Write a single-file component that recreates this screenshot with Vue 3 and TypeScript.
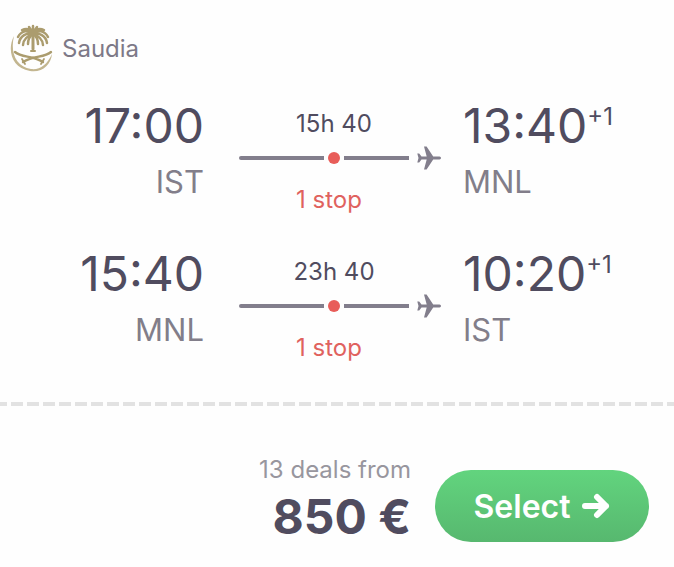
<script setup lang="ts">
interface Leg {
  id: number
  depart: string
  from: string
  duration: string
  stops: string
  arrive: string
  dayShift: string
  to: string
}

const legs: Leg[] = [
  { id: 1, depart: '17:00', from: 'IST', duration: '15h 40', stops: '1 stop', arrive: '13:40', dayShift: '+1', to: 'MNL' },
  { id: 2, depart: '15:40', from: 'MNL', duration: '23h 40', stops: '1 stop', arrive: '10:20', dayShift: '+1', to: 'IST' },
]
</script>

<template>
  <article class="ticket">
    <header class="airline">
      <svg class="emblem" viewBox="0 0 44 48" aria-hidden="true">
        <path d="M4 12C-3 25 1 44 20 47C32 49 41 41 42 30C37 41 30 46 21 45C6 43 0 29 4 12Z" fill="#c3b690" />
        <g fill="none" stroke="#ab9c6e" stroke-linecap="round">
          <path d="M23 10V25" stroke-width="3" />
          <path d="M21 27H25" stroke-width="2" />
          <path d="M23 10C18 5 11 7 8 13M23 10C17 8 10 12 9 19M23 10C18 11 13 16 13 21M23 10C20 12 18 16 18 20M23 10C28 5 35 7 38 13M23 10C29 8 36 12 37 19M23 10C28 11 33 16 33 21M23 10C26 12 28 16 28 20M23 9V2M23 9L19 3M23 9L27 3M23 9C20 5 16 4 12 6M23 9C26 5 30 4 34 6" stroke-width="2.5" />
          <path d="M5 28C12 34 22 31 33 38M41 28C34 34 24 31 13 38" stroke-width="2.4" />
          <path d="M12 35L15 40M34 35L31 40" stroke-width="1.8" />
        </g>
      </svg>
      <span>Saudia</span>
    </header>

    <section v-for="leg in legs" :key="leg.id" class="leg">
      <div class="place departure">
        <time class="clock">{{ leg.depart }}</time>
        <span class="code">{{ leg.from }}</span>
      </div>
      <div class="route">
        <span class="duration">{{ leg.duration }}</span>
        <div class="track">
          <span class="line first"></span>
          <span class="dot"></span>
          <span class="line second"></span>
          <svg class="plane" viewBox="0 0 24 24" aria-hidden="true">
            <path d="M7 0.500H9.600L16.200 10.500H22.500Q24 10.800 24 12Q24 13.200 22.500 13.500H16.200L9.600 23.500H7L9.700 13.500H4.500L2.200 16.500H0.300L1.500 12L0.300 7.500H2.200L4.500 10.500H9.700Z" fill="#827e8c" />
          </svg>
        </div>
        <span class="stops">{{ leg.stops }}</span>
      </div>
      <div class="place arrival">
        <span class="arrival-time"><time class="clock">{{ leg.arrive }}</time><sup class="shift">{{ leg.dayShift }}</sup></span>
        <span class="code">{{ leg.to }}</span>
      </div>
    </section>

    <svg class="divider" aria-hidden="true">
      <line x1="-5" y1="2" x2="100%" y2="2" />
    </svg>

    <footer class="offer">
      <div class="price">
        <span class="deals">13 deals from</span>
        <strong class="amount">850 €</strong>
      </div>
      <button type="button" class="select">
        <span>Select</span>
        <svg class="arrow" viewBox="0 0 28 26" aria-hidden="true">
          <path d="M3 13H24M15 4L24 13L15 22" />
        </svg>
      </button>
    </footer>
  </article>
</template>

<style>
body {
  background: #fefefe;
}
</style>

<style scoped>
.ticket {
  font-family: Inter, "Liberation Sans", sans-serif;
  color: #504c5f;
  padding-top: 24px;
}

.airline {
  display: flex;
  align-items: center;
  gap: 8px;
  height: 48px;
  padding-left: 10px;
  margin-bottom: 24px;
  font-size: 24px;
  color: #7d7987;
}

.emblem {
  width: 44px;
  height: 48px;
}

.leg {
  display: grid;
  grid-template-columns: minmax(0, 1fr) 202px minmax(0, 1fr);
  height: 124px;
  padding-left: 6px;
  margin-bottom: 24px;
}

.place {
  display: flex;
  flex-direction: column;
}

.departure {
  align-items: flex-end;
  padding-right: 35px;
}

.arrival {
  align-items: flex-start;
  padding-left: 22px;
}

.clock {
  font-size: 48px;
  line-height: 60px;
}

.arrival-time {
  display: flex;
}

.shift {
  font-size: 24px;
  line-height: 42px;
}

.code {
  font-size: 31px;
  line-height: 52px;
  color: #827e8a;
}

.route {
  display: flex;
  flex-direction: column;
  text-align: center;
  font-size: 24px;
}

.duration {
  padding-right: 12px;
  line-height: 56px;
}

.track {
  display: flex;
  align-items: center;
  height: 12px;
}

.line {
  height: 4px;
  background: #827e8c;
}

.first {
  flex: 85;
  border-radius: 2px 0 0 2px;
}

.second {
  flex: 65;
}

.dot {
  width: 12px;
  height: 12px;
  margin: 0 4px;
  border-radius: 50%;
  background: #e85d59;
}

.plane {
  width: 24px;
  height: 24px;
  margin-left: 8px;
}

.stops {
  padding-right: 22px;
  line-height: 72px;
  color: #e0625e;
}

.divider {
  display: block;
  width: 100%;
  height: 4px;
  margin-top: 34px;
}

.divider line {
  stroke: #e2e2e2;
  stroke-width: 4;
  stroke-dasharray: 12 4;
}

.offer {
  display: flex;
  justify-content: flex-end;
  align-items: flex-start;
  gap: 24px;
  padding: 48px 25px 16px;
}

.price {
  display: flex;
  flex-direction: column;
  align-items: flex-end;
}

.deals {
  font-size: 24px;
  line-height: 32px;
  color: #98969e;
}

.amount {
  font-size: 48px;
  line-height: 62px;
  font-weight: 700;
}

.select {
  display: flex;
  align-items: center;
  justify-content: center;
  gap: 12px;
  width: 214px;
  height: 72px;
  margin-top: 16px;
  padding: 0;
  border: 0;
  border-radius: 36px;
  background: linear-gradient(#62d47e, #57b86f);
  color: #fff;
  font-family: inherit;
  font-size: 32px;
  font-weight: 600;
  cursor: pointer;
}

.arrow {
  width: 28px;
  height: 26px;
  fill: none;
  stroke: currentColor;
  stroke-width: 6;
  stroke-linecap: round;
  stroke-linejoin: round;
}
</style>
